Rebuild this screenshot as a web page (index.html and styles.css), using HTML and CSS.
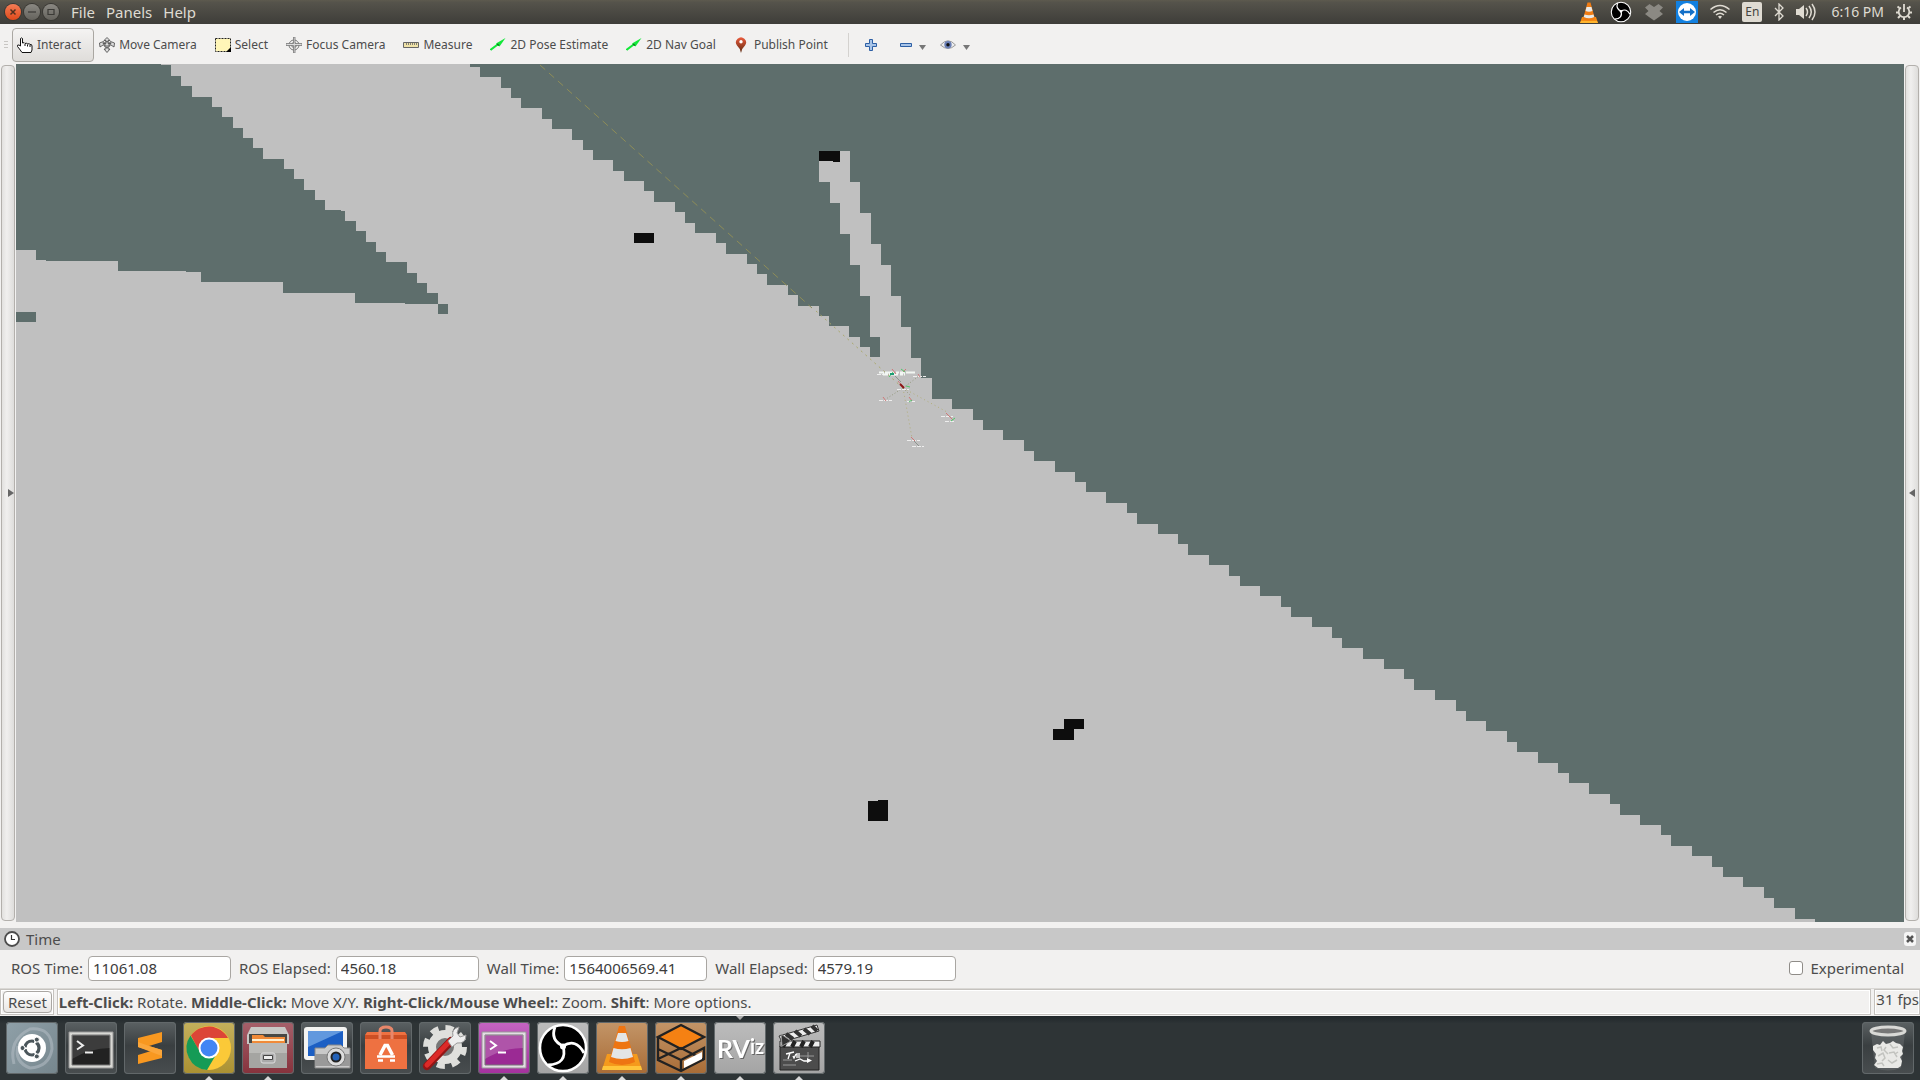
FILE: index.html
```
<!DOCTYPE html>
<html lang="en">
<head>
<meta charset="utf-8">
<title>RViz</title>
<link rel="stylesheet" href="styles.css">
</head>
<body>
<header class="panel">
  <div class="window-buttons">
    <button class="wb wb-close" aria-label="Close"><svg width="16" height="16" viewBox="0 0 16 16"><path d="M5.500 5.500l5 5M10.500 5.500l-5 5" stroke="#50301f" stroke-width="1.500"/></svg></button>
    <button class="wb" aria-label="Minimize"><svg width="16" height="16" viewBox="0 0 16 16"><path d="M4 8h8" stroke="#3b3a36" stroke-width="1.200"/></svg></button>
    <button class="wb" aria-label="Maximize"><svg width="16" height="16" viewBox="0 0 16 16"><path d="M5 5.500h6v5H5z" fill="none" stroke="#3b3a36" stroke-width="1.200"/></svg></button>
  </div>
  <nav class="menus">
    <button>File</button><button>Panels</button><button>Help</button>
  </nav>
  <div class="tray">
    <svg width="18" height="22" viewBox="0 0 18 22"><path d="M2 16h14l2 6H0z" fill="#f58a12"/><path d="M1 20h16l1 2H0z" fill="#ffb52e"/><path d="M7.500 1.500h3L15 18q-6 3-12 0z" fill="#f07c14"/><path d="M6.500 6h5l1 4q-3.500 1.500-7 0zM4.500 13.500q4.500 1.500 9 0l.8 2.500q-5.300 2.500-10.600 0z" fill="#e9e9e6"/></svg>
    <svg width="22" height="22" viewBox="0 0 52 52"><use href="#obs"/></svg>
    <svg width="20" height="18" viewBox="0 0 20 18"><path d="M5.500 1L10 4l4.500-3L19 4.500 15.500 8 19 11l-4 3-5 3.500L5 14l-4-3 3.500-3L1 4.500z" fill="#8b8983"/></svg>
    <svg width="22" height="22" viewBox="0 0 22 22"><path d="M0 0h22v22H0z" fill="#1280e0"/><circle cx="11" cy="11" r="9" fill="#fff"/><path d="M3 11l5-4v2.700h6V7l5 4-5 4v-2.700H8V15z" fill="#1470c8"/></svg>
    <svg width="20" height="16" viewBox="0 0 20 16" fill="none" stroke="#dfdbd2" stroke-width="1.500"><path d="M.5 5.500q9.500-8 19 0M3.500 8.500q6.500-5.500 13 0M6 11q4-3.500 8 0"/><path d="M8 12.500q2-1.500 4 0l-2 2.500z" fill="#dfdbd2" stroke="none"/></svg>
    <button class="lang">En</button>
    <svg width="10" height="18" viewBox="0 0 10 18" fill="none" stroke="#dfdbd2" stroke-width="1.300"><path d="M1 5l8 8-4 4V1l4 4-8 8"/></svg>
    <svg width="20" height="18" viewBox="0 0 20 18" fill="none" stroke="#dfdbd2" stroke-width="1.500"><path d="M0 6h3l5-4v14l-5-4H0z" fill="#dfdbd2" stroke="none"/><path d="M10 5q3 4 0 8M13 3q4.500 6 0 12M16 1q6 8 0 16"/></svg>
    <time>6:16 PM</time>
    <svg width="16" height="16" viewBox="0 0 16 16" fill="none" stroke="#dfdbd2"><path d="M5 3.500A5.300 5.300 0 1 0 11 3.500" stroke-width="1.700"/><path d="M8 0v8" stroke-width="1.800"/><path d="M3.500 4L1.500 2.500M12.500 4l2-1.500M2.500 8.500H0M13.500 8.500H16M4 12l-2 2M12 12l2 2M8 13.500V16" stroke-width="2"/></svg>
  </div>
</header>

<div class="toolbar">
  <span class="grip"></span>
  <button class="tool active"><svg width="16" height="16" viewBox="0 0 16 16"><path d="M3.500 9V1.500q1.200-1.200 2 0V6q2-1 2.500.5 2-1 2.500.5 2-.8 2.500.5 2-.5 2 1.500v4l-1 2.500H5L2.500 12 .5 9.500q-.5-2 1.500-1.500z" fill="#fff" stroke="#111"/><path d="M8 7v2M10.500 7.500v2M13 8v2" stroke="#111"/></svg>Interact</button>
  <button class="tool"><svg width="16" height="16" viewBox="0 0 16 16"><g fill="#ddd" stroke="#555" stroke-width=".9"><path d="M8 .5l3 3H9v3h3l-.5-2L15.500 6 15 10l-3-2H9v4h2l-3 3.500L5 12h2V8H4l-3 2L.5 6 4.500 4.500 4 6.500h3v-3H5z"/><circle cx="8" cy="7.500" r="3" fill="none"/></g></svg>Move Camera</button>
  <button class="tool"><svg width="16" height="14" viewBox="0 0 16 14"><path d="M.5.500h15v13H.5z" fill="#fff6b8" stroke="#222" stroke-dasharray="2 1"/><path d="M16 9v5h-5z"/></svg>Select</button>
  <button class="tool"><svg width="16" height="16" viewBox="0 0 16 16" fill="none" stroke="#777"><circle cx="8" cy="8" r="5"/><circle cx="8" cy="8" r="2.500"/><path d="M7.500 0v6.500H0v2h7.500V16h1.500V8.500h7v-2H9V0z" fill="#ddd" stroke-width=".8"/></svg>Focus Camera</button>
  <button class="tool"><svg width="16" height="16" viewBox="0 0 16 16"><path d="M.5 5.500h15v5H.5z" fill="#f0e3a8" stroke="#666"/><path d="M3.500 6v2M5.500 6v2M7.500 6v2M9.500 6v2M11.500 6v2M13.500 6v2" stroke="#666" stroke-width=".8"/></svg>Measure</button>
  <button class="tool"><svg width="16" height="16" viewBox="0 0 16 16"><use href="#arrow"/></svg>2D Pose Estimate</button>
  <button class="tool"><svg width="16" height="16" viewBox="0 0 16 16"><use href="#arrow"/></svg>2D Nav Goal</button>
  <button class="tool"><svg width="16" height="16" viewBox="0 0 16 16"><path d="M7 16Q6 11 3 8.500A5 5 0 1 1 11 8.500Q8 11 7 16z" fill="url(#pinfill)"/><circle cx="7" cy="4.800" r="1.700" fill="#fff"/></svg>Publish Point</button>
  <span class="divider"></span>
  <button class="mini" aria-label="Add tool"><svg width="12" height="12" viewBox="0 0 12 12"><path d="M4.500.500h3v4h4v3h-4v4h-3v-4h-4v-3h4z" fill="#a8c4e8" stroke="#2d5fa4"/></svg></button>
  <button class="mini drop" aria-label="Remove tool"><svg width="12" height="12" viewBox="0 0 12 12"><path d="M.5 4.500h11v3H.5z" fill="#a8c4e8" stroke="#2d5fa4"/></svg><svg class="caret" width="7" height="5" viewBox="0 0 7 5"><path d="M0 0h7L3.500 5z" fill="#777"/></svg></button>
  <button class="mini drop" aria-label="Visibility"><svg width="16" height="12" viewBox="0 0 16 12"><path d="M.5 6Q8-2.500 15.500 6 8 13 .5 6z" fill="#eee" stroke="#999"/><circle cx="8" cy="5.800" r="3.700" fill="#6a7fb5"/><circle cx="8" cy="5.800" r="1.700" fill="#111"/></svg><svg class="caret" width="7" height="5" viewBox="0 0 7 5"><path d="M0 0h7L3.500 5z" fill="#777"/></svg></button>
</div>

<main class="workspace">
  <button class="side side-left" aria-label="Show left panel"><svg width="6" height="8" viewBox="0 0 6 8"><path d="M0 0l6 4-6 4z" fill="#666"/></svg></button>
  <svg class="scene" viewBox="16 64 1888 858" preserveAspectRatio="xMinYMin slice" role="img" aria-label="Occupancy map">
    <g shape-rendering="crispEdges">
      <path fill="#5e6e6c" d="M16 64h1888v858H16z"/>
      <path fill="#c0c0c0" d="M16 64H470V67H480V77H501V88H511V98H521V108H542V119H552V129H572V140H583V150H593V160H613V171H624V181H644V191H654V202H675V212H685V223H695V233H716V243H726V254H747V264H757V274H767V285H788V295H798V306H819V316H829V326H849V337H860V347H870V357H880V337H870V296H860V265H850V234H840V203H830V182H819V151H850V182H860V213H871V244H881V265H891V296H901V327H911V358H921V378H932V399H952V409H973V420H983V430H1003V440H1024V451H1034V461H1055V472H1075V482H1086V492H1106V503H1127V513H1137V524H1158V534H1178V544H1188V555H1209V565H1229V576H1240V586H1260V596H1281V607H1291V617H1312V627H1332V638H1342V648H1363V659H1384V669H1404V679H1414V690H1435V700H1456V711H1466V721H1486V731H1507V742H1517V752H1538V763H1558V773H1569V783H1589V794H1610V804H1620V815H1640V825H1661V835H1671V846H1692V856H1712V867H1723V877H1743V887H1764V898H1774V908H1795V919H1815V922H16z"/>
      <path fill="#5e6e6c" d="M16 64H161V65H171V76H181V86H192V97H212V107H222V117H233V128H243V138H253V148H263V159H284V169H294V179H304V190H315V200H325V210H341V211H345V221H356V231H366V242H376V252H386V262H407V273H417V283H427V293H438V304H448V314H438V304H405V303H355V293H283V282H201V272H186V271H118V261H46V260H36V250H16zM16 312h20v10H16z"/>
      <path fill="#0d0d0d" d="M819 151h21v11h-7v-1h-14zM634 233h20v10h-20zM1064 719h20v10h-10v11h-21v-11h11zM868 801h10v-1h10v21h-20z"/>
    </g>
    <g fill="none">
      <path d="M540 65L812 308" stroke="#8e8d58" stroke-dasharray="7 5"/>
      <path d="M816 311L903 388" stroke="#aaa86e" stroke-dasharray="2 4"/>
      <path d="M903 388l9 50M903 388l44 24" stroke="#b2ae7c" stroke-dasharray="1 3"/>
      <path d="M903 388l-17 11M903 388l16-12M903 388l8 8" stroke="#969a80" stroke-dasharray="1 2"/>
      <path d="M879 372.500h38M883 374.500h22" stroke="#f2f6f2" stroke-width="2" stroke-dasharray="5 1 9 2 3 1"/>
      <path d="M877 374.500h6M913 376.500h13M897 389.500h12M879 400.500h13M907 401.500h8M941 416.500h12M945 421.500h10M907 440.500h13M912 446.500h12" stroke="#eee" stroke-dasharray="4 1"/>
      <path d="M892 369l4 5M903 372l3-3M898 381l6 7M883 397l3 4M909 397l3 4M946 413l7 7M911 437l4 4M918 374l2 3" stroke="#ce7878"/>
      <path d="M901 369l4 3M889 377l4-5M909 402l3-2M951 421l4-3M906 386l4 1" stroke="#4cc868"/>
      <path d="M895 376l6 6M914 441l5 5" stroke="#8e938e"/>
      <path d="M900 384l4 4" stroke="#8c1616" stroke-width="2"/>
      <path d="M890 374h4" stroke="#1b9c74" stroke-width="2"/>
    </g>
  </svg>
  <button class="side" aria-label="Show right panel"><svg width="6" height="8" viewBox="0 0 6 8"><path d="M6 0L0 4l6 4z" fill="#666"/></svg></button>
</main>

<section class="time-panel">
  <h2 class="dock-title"><svg width="16" height="16" viewBox="0 0 16 16"><circle cx="8" cy="8" r="7" fill="#fff" stroke="#4c4c4c" stroke-width="1.800"/><path d="M7.500 4v4.500H11" fill="none" stroke="#333" stroke-width="1.200"/></svg>Time
    <button class="close-panel" aria-label="Close panel"><svg width="8" height="8" viewBox="0 0 8 8"><path d="M1 1l6 6M7 1L1 7" stroke="#555" stroke-width="2.500"/></svg></button></h2>
  <form class="fields">
    <label for="rt">ROS Time:</label><input id="rt" value="11061.08">
    <label for="re">ROS Elapsed:</label><input id="re" value="4560.18">
    <label for="wt">Wall Time:</label><input id="wt" value="1564006569.41">
    <label for="we">Wall Elapsed:</label><input id="we" value="4579.19">
    <label class="experimental"><input type="checkbox">Experimental</label>
  </form>
</section>

<footer class="status">
  <div class="cell"><button class="reset">Reset</button></div>
  <p class="cell hint"><span><b>Left-Click:</b> Rotate. <b>Middle-Click:</b> Move X/Y. <b>Right-Click/Mouse Wheel:</b>: Zoom. <b>Shift</b>: More options.</span></p>
  <p class="cell fps">31 fps</p>
</footer>

<nav class="launcher">
  <button class="app dash" aria-label="Search"><svg viewBox="0 0 52 52"><path d="M8 42Q2 18 24 7q22-2 22 20-3 18-22 19Q8 40 12 24" fill="none" stroke="#b4bec4" stroke-width="3" opacity=".55"/><circle cx="26" cy="26" r="14" fill="#fff"/><circle cx="26" cy="26" r="7" fill="none" stroke="#4b565b" stroke-width="3.200" stroke-dasharray="12.600 2" stroke-dashoffset="-8"/><g fill="#4b565b" stroke="#fff"><circle cx="16.500" cy="26" r="2.500"/><circle cx="30.800" cy="17.600" r="2.500"/><circle cx="30.800" cy="34.400" r="2.500"/></g></svg></button>
  <button class="app" aria-label="Terminal"><svg viewBox="0 0 52 52"><path d="M4 10h44v36H4z" fill="#d8d8d4" stroke="#999"/><path d="M7 13h38v30H7z" fill="#222" stroke="#777"/><path d="M7 13h38v13Q25 26 7 37z" fill="#fff" opacity=".12"/><path d="M12 19l6 4.500-6 4M20 30.500h8" fill="none" stroke="#eee" stroke-width="2"/></svg></button>
  <button class="app" aria-label="Sublime Text"><svg viewBox="0 0 52 52"><path d="M14 20v-4l24-6v10l-13 4 13 4v8l-24 6V33l13-4-13-4z" fill="#f89820"/><path d="M14 20l11 4 13 4v6l-24-9z" fill="#fba63a"/></svg></button>
  <button class="app chrome running" aria-label="Chrome"><svg viewBox="0 0 52 52"><circle cx="26" cy="26" r="22" fill="#fbc938"/><path d="M26 26L26 16h19A22 22 0 0 0 8 13.500L17 31z" fill="#dc4537"/><path d="M7.500 13.500A22 22 0 0 0 24 48l10-17-8-3-9 2z" fill="#159b56"/><circle cx="26" cy="26" r="10.500" fill="#fff"/><circle cx="26" cy="26" r="8.500" fill="#4285f4"/></svg></button>
  <button class="app files running" aria-label="Files"><svg viewBox="0 0 52 52"><path d="M9 5h34l4 8v9H5v-9z" fill="#c8c8c5"/><path d="M7 12h38v10H7z" fill="#484844"/><path d="M10 13h11l2 2h20v7H10z" fill="#f08a38"/><path d="M10 17h32v2H10z" fill="#fff0d0"/><path d="M7 21h38v25H7z" fill="#a5a5a2"/><path d="M7 21h38v10H7z" fill="#babab7"/><rect x="19" y="31" width="14" height="10" rx="2" fill="#aaa" stroke="#ddd"/><path d="M21.500 33.500h9v4h-9z" fill="#eee" stroke="#444"/></svg></button>
  <button class="app" aria-label="Screenshot"><svg viewBox="0 0 52 52"><rect x="3" y="5" width="43" height="33" rx="3" fill="#f4f4f2"/><path d="M7 9h35v25H7z" fill="#1c5fc4"/><path d="M7 9h35L7 25z" fill="#7fb0ea" opacity=".7"/><path d="M14 26h10l3-3h13l3 3h6v20H14z" fill="#c9c9c9" stroke="#888"/><path d="M14 32h35v12H14z" fill="#999"/><circle cx="35" cy="35" r="9" fill="#ddd" stroke="#777"/><circle cx="35" cy="35" r="4.500" fill="#2462b8" stroke="#222" stroke-width="2"/></svg></button>
  <button class="app" aria-label="Software"><svg viewBox="0 0 52 52"><path d="M5 13l2-3h38l2 3v34H5z" fill="#ee7141"/><path d="M5 13h42v4H5z" fill="#cc4f24"/><path d="M20 17V9q0-4 6-4t6 4v8" fill="none" stroke="#e8876a" stroke-width="3"/><path d="M20 33l5-9.500h2.500L32.500 33" fill="none" stroke="#fff" stroke-width="3.500"/><path d="M17 34.500h18M18 38.500h5M30 38.500h5" stroke="#fff" stroke-width="2.500"/></svg></button>
  <button class="app" aria-label="Settings"><svg viewBox="0 0 52 52"><circle cx="26" cy="25" r="19" fill="none" stroke="#dededb" stroke-width="6" stroke-dasharray="8 6.900"/><circle cx="26" cy="25" r="13" fill="#777" stroke="#e0e0dd" stroke-width="8"/><path d="M8 44L32 19" stroke="#941515" stroke-width="8" stroke-linecap="round"/><path d="M8 43L31 19" stroke="#dc2a28" stroke-width="5" stroke-linecap="round"/><path d="M29 19l5-5q-2-7 6-9l-2 6 3 4 6-2q0 9-9 8l-5 4z" fill="#eee" stroke="#999"/></svg></button>
  <button class="app term2 running" aria-label="Terminator"><svg viewBox="0 0 52 52"><path d="M4 10h44v36H4z" fill="#e4dce4" stroke="#999"/><path d="M7 13h38v30H7z" fill="#9b2a94" stroke="#777"/><path d="M7 13h38v13Q25 26 7 37z" fill="#fff" opacity=".2"/><path d="M12 19l6 4.500-6 4M20 30.500h8" fill="none" stroke="#fff" stroke-width="2"/></svg></button>
  <button class="app grey running" aria-label="OBS"><svg viewBox="0 0 52 52"><g id="obs"><circle cx="26" cy="26" r="23" fill="#000" stroke="#fff" stroke-width="2.500"/><path d="M26 24Q13 18 18 5M26 24Q39 16 47 31M26 24Q31 42 11 43" fill="none" stroke="#fff" stroke-width="2.800"/><circle cx="26" cy="24.500" r="3" fill="#fff"/></g></svg></button>
  <button class="app orange running" aria-label="VLC"><svg viewBox="0 0 52 52"><path d="M11 32h30l5 16H6z" fill="#f59a1c"/><path d="M7 44h38l1 4H6z" fill="#ffc53a"/><path d="M23 4h6l10 36q-13 6-26 0z" fill="#ee7512"/><path d="M22 11h8l2.500 8q-6.500 2-13 0zM17.500 26q8.500 2.500 17 0l2.500 9q-11 4-22 0z" fill="#e3e5e6"/></svg></button>
  <button class="app orange running" aria-label="Gazebo"><svg viewBox="0 0 52 52"><path d="M26 3L48 15 26 26 4 15z" fill="#f58113"/><path d="M26 3L49 15 26 27 3 15zM3 15v23l23 11 23-12V26L26 38 3 27M3 37l23-11 23 12M26 38v11" fill="none" stroke="#222" stroke-width="2.400"/><path d="M29 39l18-9v7l-18 9z" fill="#fff"/></svg></button>
  <button class="app grey running focused" aria-label="RViz"><svg viewBox="0 0 52 52"><text class="rviz-logo" x="3" y="36">RV<tspan class="rviz-small" dy="-4">iz</tspan></text></svg></button>
  <button class="app grey running" aria-label="Video editor"><svg viewBox="0 0 52 52"><path d="M7 24h39v24H7z" fill="#4c4c4c" stroke="#222"/><path d="M6 14L44 3l2 6L9 20z" fill="#eee" stroke="#333"/><path d="M13 12l7 5M22 9l6 5M31 7l6 5M39 4l5 5" stroke="#333" stroke-width="4"/><path d="M7 19h40v6H7z" fill="#eee" stroke="#222"/><path d="M13 19l-3 6M22 19l-3 6M31 19l-3 6M40 19l-3 6" stroke="#222" stroke-width="4"/><path d="M8 12l10 7-9 5z" fill="#333" stroke="#999"/><path d="M13 32l8-2M17 31l-2 6M20 34l1 2 2-4M24 31v5M26 31v5M22 39l5-2 4 2h4" fill="none" stroke="#fff" stroke-width="1.300"/><path d="M34 36l5 2.500-5 2.500z" fill="#fff"/><path d="M10 38h9M10 43h13M27 34h14M35 30v6" stroke="#999"/></svg></button>
  <button class="app trash" aria-label="Trash"><svg viewBox="0 0 52 52"><path d="M9 10l4 36q13 5 26 0l4-36z" fill="#6b7071" opacity=".5"/><path d="M11 24l4-2 3 1 3-4 3 3 4-1 3-2 3 2 4 1 3 3-1 4 1 3-3 3 2 4-1 5-3 2H16l-4-3 3-4-2-3 1-4-3-4z" fill="#e9e9e6"/><path d="M15 26l4-1 1 4M28 22l3 4 5-1M16 34l5-3 2 5-3 3M27 31l5-1 3 5M26 38l4 3 5-3M15 42l5-1 2 3M24 25l-2 3 4 4M36 30l-3 2" fill="none" stroke="#c2c3bf" stroke-width="1.500"/><ellipse cx="26" cy="9" rx="17" ry="4" fill="#777" stroke="#d9d9d6" stroke-width="3"/></svg></button>
</nav>

<svg class="defs" width="0" height="0" aria-hidden="true"><defs>
  <linearGradient id="pinfill" x1="0" y1="0" x2="0" y2="1"><stop offset="0" stop-color="#ea5a3c"/><stop offset="1" stop-color="#5a2a10"/></linearGradient>
  <g id="arrow"><path d="M.5 13L9 6.500" stroke="#12e838" stroke-width="2"/><path d="M6 6.500L15.500 1 9.500 9.500z" fill="#12e838"/><path d="M7 7l2 1.500" stroke="#0a7a1c" stroke-width="1.500"/></g>
</defs></svg>
</body>
</html>
```
FILE: styles.css
```
* { box-sizing: border-box; }

body {
  margin: 0;
  height: 100vh;
  display: flex;
  flex-direction: column;
  overflow: hidden;
  background: #f2f1f0;
  color: #4c4c4c;
  font: 15px/20px "Noto Sans", "Open Sans", sans-serif;
}

button {
  margin: 0;
  padding: 0;
  border: 0;
  background: none;
  color: inherit;
  font: inherit;
}

svg { display: block; flex: none; }
p, h2 { margin: 0; font: inherit; }

/* top panel */
.panel {
  flex: none;
  height: 24px;
  display: flex;
  align-items: center;
  padding: 0 8px 0 5px;
  background: linear-gradient(#5d5a4e, #55534b 10%, #3e3d39);
  color: #dfdbd2;
}
.window-buttons { display: flex; gap: 3px; }
.wb {
  width: 16px;
  height: 16px;
  border-radius: 50%;
  background: linear-gradient(#8a8882, #65635d);
  box-shadow: 0 0 0 1px #393833;
}
.wb-close { background: linear-gradient(#f47c55, #df4a1b); }
.menus { display: flex; gap: 11px; margin-left: 12px; }
.tray { display: flex; align-items: center; gap: 12px; margin-left: auto; font-size: 14px; }
.tray time { margin-left: 3px; }
.lang {
  width: 20px;
  height: 20px;
  border-radius: 2px;
  background: #dfdbd2;
  color: #45443f;
  font-size: 12px;
}

/* toolbar */
.toolbar {
  flex: none;
  height: 40px;
  display: flex;
  align-items: center;
  padding: 1px 4px 0;
  font-size: 12px;
}
.grip {
  width: 4px;
  height: 8px;
  margin-right: 4px;
  background: repeating-linear-gradient(#c8c6c3 0 1px, transparent 1px 3px);
}
.tool {
  height: 34px;
  display: flex;
  align-items: center;
  gap: 4px;
  padding: 0 9px;
}
.tool.active {
  padding: 0 12px 0 4px;
  border: 1px solid #aaa7a2;
  border-radius: 4px;
  background: linear-gradient(#f4f3f2, #dfddda);
  margin-right: -4px;
}
.divider { width: 1px; height: 24px; margin: 0 16px 0 11px; background: #d4d2cf; }
.mini { display: flex; align-items: center; margin-right: 23px; }
.drop { gap: 7px; margin-right: 14px; }
.caret { margin-top: 6px; }

/* 3D view */
.workspace { flex: 1 1 0; min-height: 0; display: flex; }
.side {
  flex: none;
  width: 14px;
  margin: 1px;
  display: flex;
  align-items: center;
  justify-content: center;
  border: 1px solid #b3b0ac;
  border-radius: 4px;
  background: linear-gradient(90deg, #e2e1df, #f0efee 40%, #dedddb);
}
.side-left { justify-content: flex-end; }
.scene { flex: 1; min-width: 0; height: 100%; }

/* time panel */
.time-panel { flex: none; padding-top: 6px; }
.dock-title {
  height: 22px;
  display: flex;
  align-items: center;
  gap: 6px;
  padding: 0 4px;
  background: #c8c8c8;
}
.close-panel {
  width: 12px;
  height: 14px;
  display: flex;
  align-items: center;
  justify-content: center;
  margin-left: auto;
  border-radius: 3px;
  background: #f6f6f6;
}
.fields {
  height: 38px;
  display: flex;
  align-items: center;
  gap: 5px;
  padding: 0 16px 2px 11px;
}
.fields input:not([type]) {
  width: 143px;
  height: 25px;
  margin-right: 3px;
  padding: 0 4px;
  border: 1px solid #a9a6a2;
  border-radius: 4px;
  background: #fff;
  color: #3c3c3c;
  font: inherit;
}
.experimental { display: flex; align-items: center; gap: 8px; margin-left: auto; }
.experimental input {
  appearance: none;
  width: 14px;
  height: 14px;
  margin: 0;
  border: 1px solid #8f8c88;
  border-radius: 3px;
  background: #fff;
}

/* status bar */
.status {
  flex: none;
  height: 28px;
  display: flex;
  gap: 3px;
  padding-bottom: 1px;
  border-top: 1px solid #dad8d5;
}
.cell {
  display: flex;
  align-items: center;
  border: 1px solid #c5c2be;
  box-shadow: inset 0 0 0 1px #fff;
  white-space: nowrap;
}
.reset {
  height: 22px;
  margin: 0 1px 0 2px;
  padding: 0 4px;
  border: 1px solid #aaa7a3;
  border-radius: 4px;
  background: linear-gradient(#fff, #e8e6e4);
}
.hint { flex: 1; min-width: 0; padding-left: 1px; }
.fps { padding: 0 0 6px 1px; }

/* launcher */
.launcher {
  flex: none;
  height: 64px;
  display: flex;
  align-items: center;
  gap: 7px;
  padding: 0 6px;
  background: linear-gradient(#20272a, #2e3436 12%);
}
.app {
  position: relative;
  width: 52px;
  height: 52px;
  border-radius: 4px;
  background: linear-gradient(#5b6163, #3a3f41 45%, #484d4f);
  box-shadow: inset 0 0 0 1px #62686a;
}
.app svg { width: 52px; height: 52px; }
.dash { background: linear-gradient(135deg, #8fa0a8, #76868d); }
.chrome { background: linear-gradient(#c4b05c, #ab9132); }
.files { background: linear-gradient(#a5606a, #86323c); }
.term2 { background: linear-gradient(#c565c2, #a4319e); }
.grey { background: linear-gradient(#bcbcbc, #a4a4a4); }
.orange { background: linear-gradient(#c39568, #a96c36); }
.trash { margin-left: auto; }
.rviz-logo {
  fill: #fff;
  font: 700 25px Lato, sans-serif;
  filter: drop-shadow(1px 1px 0 #666);
}
.rviz-small { font-size: 20px; }
.running::after, .focused::before {
  content: "";
  position: absolute;
  left: 22px;
  border: 4px solid transparent;
}
.running::after { top: 50px; border-bottom-color: #d8d8d8; }
.focused::before { top: -6px; border-top-color: #a8a8a8; }
```
